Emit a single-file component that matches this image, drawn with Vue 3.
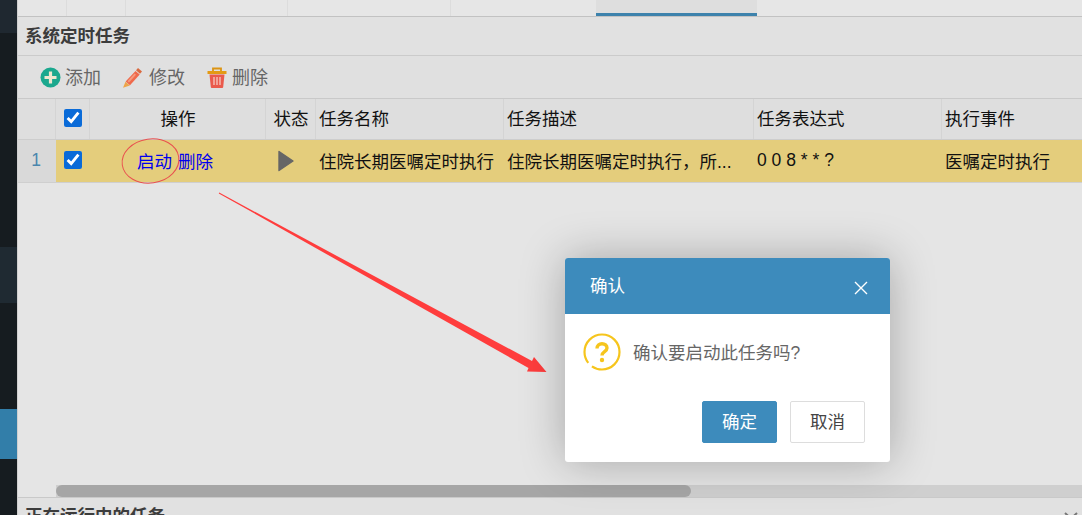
<script setup>
const columns = ['', '', '操作', '状态', '任务名称', '任务描述', '任务表达式', '执行事件']
const tabs = [
  { w: 49 }, { w: 59 }, { w: 162 }, { w: 163 }, { w: 146 }, { w: 161, active: true }, { w: 325, last: true }
]
</script>

<template>
  <div class="page">
    <aside class="sidebar">
      <div class="side-top"></div>
      <div class="side-gap g1"></div>
      <div class="side-hover"></div>
      <div class="side-gap g2"></div>
      <div class="side-active"></div>
    </aside>

    <main class="main">
      <nav class="tabs">
        <div v-for="(t, i) in tabs" :key="i" class="tab" :class="{ active: t.active, last: t.last }" :style="{ width: t.w + 'px' }"></div>
      </nav>

      <section class="panel">
        <header class="title">系统定时任务</header>
        <div class="toolbar">
          <button class="tool add">
            <svg width="21" height="21" viewBox="0 0 21 21"><circle cx="10.5" cy="10.5" r="10" fill="#1ba88e"/><path d="M10.5 4.5v12M4.5 10.5h12" stroke="#efe6cf" stroke-width="3.2"/></svg>
            添加
          </button>
          <button class="tool edit">
            <svg width="21" height="21" viewBox="0 0 21 21"><path d="M16 1l4 3.400-2 2.300-4-3.400z" fill="#d9693f"/><path d="M13.500 4l4.200 3.500-9.700 10.800-4.400-3.700z" fill="#ef6a4c"/><path d="M12.500 6.500l1.500 1.200-7 7.800-1.500-1.200z" fill="#f59a7e"/><path d="M3.500 14.800l4.400 3.600-6.900 2.400z" fill="#eda54a"/></svg>
            修改
          </button>
          <button class="tool trash">
            <svg width="20" height="21" viewBox="0 0 20 21"><path d="M6 4.500V1.500h8v3" fill="none" stroke="#dc9413" stroke-width="1.800"/><rect x="0.500" y="4" width="19" height="3" fill="#e39a14"/><path d="M2.500 7.500h15l-1.300 12.600a1 1 0 0 1-1 .9H4.800a1 1 0 0 1-1-.9z" fill="#ea5a4c"/><path d="M7 10v8M10 10v8M13 10v8" stroke="#f6c9c0" stroke-width="1.300"/></svg>
            删除
          </button>
        </div>

        <div class="table-head grid">
          <div v-for="(c, i) in columns" :key="i" class="hcell" :class="{ center: i === 2 || i === 3 }">
            <input v-if="i === 1" class="check" type="checkbox" checked />
            <template v-else>{{ c }}</template>
          </div>
        </div>
        <div class="table-row grid">
          <div class="cell num">1</div>
          <div class="cell box"><input class="check" type="checkbox" checked /></div>
          <div class="cell ops"><a class="link">启动</a><a class="link">删除</a></div>
          <div class="cell state">
            <svg width="16" height="22" viewBox="0 0 16 22"><path d="M1 1.500L15 11 1 20.500z" fill="#666" stroke="#666" stroke-width="1.400" stroke-linejoin="round"/></svg>
          </div>
          <div class="cell">住院长期医嘱定时执行</div>
          <div class="cell">住院长期医嘱定时执行，所...</div>
          <div class="cell">0 0 8 * * ?</div>
          <div class="cell">医嘱定时执行</div>
        </div>

        <div class="body-space"></div>
        <div class="scroll-track"><div class="scroll-thumb"></div></div>
      </section>

      <section class="bottom">
        <span class="bottom-title">正在运行中的任务</span>
        <svg class="chev" width="14" height="8" viewBox="0 0 14 8"><path d="M1 1l6 5.500L13 1" fill="none" stroke="#777" stroke-width="2"/></svg>
      </section>
    </main>

    <svg class="annot" width="1082" height="515" viewBox="0 0 1082 515">
      <ellipse cx="150.500" cy="161" rx="28.500" ry="22" transform="rotate(-8 150.500 161)" fill="none" stroke="#e9504f" stroke-width="1"/>
      <path d="M219.200 192.600L532 361L534 357L546.500 372L527 371.500L528.500 368L218.800 193.400Z" fill="#ff3d3d"/>
    </svg>

    <div class="dialog">
      <div class="dialog-head">
        <span>确认</span>
        <svg width="14" height="14" viewBox="0 0 14 14"><path d="M1 1l12 12M13 1L1 13" stroke="#fff" stroke-width="1.400"/></svg>
      </div>
      <div class="dialog-body">
        <div class="message">
          <svg width="38" height="38" viewBox="0 0 38 38"><circle cx="19" cy="19" r="17.500" fill="none" stroke="#f6c51d" stroke-width="2.200" stroke-dasharray="38 5 67"/><path d="M14 15.500c0-3 2.200-4.800 5-4.800s5 1.700 5 4.400c0 3.700-5 3.600-5 7.500" fill="none" stroke="#f6c51d" stroke-width="3.400"/><circle cx="19" cy="27" r="2.200" fill="#f6c51d"/></svg>
          <span class="message-text">确认要启动此任务吗?</span>
        </div>
        <div class="actions">
          <button class="btn primary">确定</button>
          <button class="btn">取消</button>
        </div>
      </div>
    </div>
  </div>
</template>

<style>
html, body { margin: 0; overflow: hidden; }
</style>

<style scoped>
.page {
  position: relative;
  display: flex;
  width: 1082px;
  height: 515px;
  overflow: hidden;
  background: #e5e5e5;
  font-family: "Liberation Sans", "Noto Sans CJK SC", sans-serif;
  font-size: 17.5px;
}
.sidebar {
  width: 17px;
  flex: none;
  background: #161c20;
  border-right: 1px solid #cfcfcf;
  display: flex;
  flex-direction: column;
}
.side-top { height: 33px; background: #1f2830; }
.side-gap.g1 { height: 214px; }
.side-hover { height: 56px; background: #1f2a32; }
.side-gap.g2 { height: 106px; }
.side-active { height: 50px; background: #327ea9; }

.main { flex: 1; min-width: 0; display: flex; flex-direction: column; height: 515px; }

.tabs { display: flex; height: 16px; flex: none; border-bottom: 1px solid #c2c2c2; box-sizing: content-box; background: #e6e6e6; }
.tab { flex: none; box-sizing: border-box; border-right: 1px solid #dcdcdc; }
.tab.active { background: #dedede; border-right: 0; border-bottom: 3px solid #3d82ac; margin-left: -1px; }
.tab.last { border-right: 0; }

.panel { height: 480px; flex: none; display: flex; flex-direction: column; }
.title {
  height: 39px;
  box-sizing: border-box;
  flex: none;
  padding-left: 7px;
  line-height: 39px;
  font-weight: 700;
  color: #3c3c3c;
  background: #e1e1e1;
  border-bottom: 1px solid #cbcbcb;
}
.toolbar {
  height: 43px;
  box-sizing: border-box;
  flex: none;
  display: flex;
  align-items: center;
  padding: 1px 0 0 22px;
  background: #e0e0e0;
  border-bottom: 1px solid #c9c9c9;
}
.tool {
  display: inline-flex;
  align-items: center;
  gap: 4px;
  padding: 0;
  border: 0;
  background: none;
  font: inherit;
  font-size: 18px;
  color: #666;
  line-height: 1;
}
.tool.edit { margin-left: 21px; gap: 6px; }
.tool.trash { margin-left: 22px; gap: 5px; }

.grid {
  display: grid;
  grid-template-columns: 38px 34px 176px 50px 188px 250px 188px 1fr;
  flex: none;
}
.table-head {
  height: 41px;
  box-sizing: border-box;
  background: #dedede;
  border-bottom: 1px solid #cdcdcd;
  color: #111;
}
.hcell {
  display: flex;
  align-items: center;
  padding: 0 0 3px 3px;
  border-right: 1px solid #d4d4d4;
  white-space: nowrap;
  overflow: hidden;
}
.hcell.center { justify-content: center; padding-left: 1px; }
.hcell:nth-child(2) { justify-content: center; padding: 0 0 2px; }
.hcell:last-child { border-right: 0; }
.check {
  width: 18px;
  height: 18px;
  margin: 0;
  accent-color: #0a6bd8;
}
.table-row {
  height: 43px;
  box-sizing: border-box;
  background: #e4cd7c;
  border-bottom: 1px solid #cfcfcf;
  color: #111;
}
.cell {
  display: flex;
  align-items: center;
  padding: 0 0 2px 3px;
  white-space: nowrap;
  overflow: hidden;
  min-width: 0;
}
.cell.num { background: #d9d9d9; color: #4a86ad; justify-content: center; padding-left: 0; padding-right: 2px; }
.cell.box { justify-content: center; padding-left: 0; }
.cell.ops { justify-content: center; gap: 6px; padding: 0 6px 2px 0; }
.cell.state { justify-content: center; padding: 0 11px 0 0; }
.link { color: #0000ee; }

.body-space { flex: 1; }
.scroll-track { height: 12px; flex: none; margin-left: 38px; background: #cfcfcf; }
.scroll-thumb { width: 635px; height: 12px; border-radius: 6px; background: #a6a6a6; }

.bottom {
  flex: 1;
  min-height: 0;
  background: #e1e1e1;
  border-top: 1px solid #c9c9c9;
  padding-left: 7px;
  display: flex;
  align-items: flex-start;
  justify-content: space-between;
  font-weight: 700;
  color: #3c3c3c;
  overflow: hidden;
}
.bottom-title { line-height: 36px; }
.chev { margin: 14px 4px 0 0; flex: none; }

.annot { position: absolute; left: 0; top: 0; pointer-events: none; }

.dialog {
  position: absolute;
  left: 565px;
  top: 258px;
  width: 325px;
  height: 204px;
  border-radius: 3px;
  background: #fff;
  box-shadow: 0 0 45px rgba(0, 0, 0, 0.28);
  overflow: hidden;
  display: flex;
  flex-direction: column;
}
.dialog-head {
  height: 56px;
  box-sizing: border-box;
  flex: none;
  background: #3d8bbc;
  color: #fff;
  display: flex;
  align-items: center;
  justify-content: space-between;
  padding: 0 22px 4px 25px;
}
.dialog-head svg { margin-top: 8px; }
.dialog-body { flex: 1; display: flex; flex-direction: column; padding: 19px 25px 19px 18px; }
.message { display: flex; align-items: center; gap: 12px; color: #666; }
.message svg { flex: none; }
.message-text { padding-bottom: 2px; }
.actions { margin-top: auto; display: flex; justify-content: flex-end; gap: 13px; }
.btn {
  width: 75px;
  height: 42px;
  box-sizing: border-box;
  border: 1px solid #dddddd;
  border-radius: 2px;
  background: #fff;
  color: #444;
  font: inherit;
  padding: 0 0 4px;
}
.btn.primary { background: #3d8bbc; border-color: #3d8bbc; color: #fff; }
</style>
